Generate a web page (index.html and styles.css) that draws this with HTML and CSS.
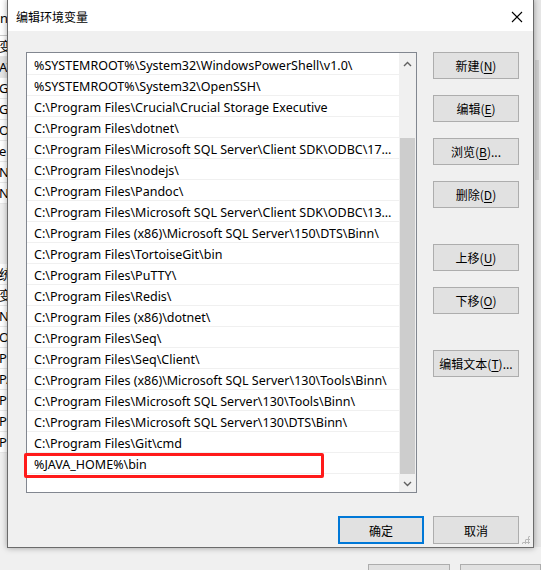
FILE: index.html
```html
<!DOCTYPE html>
<html lang="zh-CN">
<head>
  <meta charset="UTF-8">
  <title>编辑环境变量</title>
  <link rel="stylesheet" href="styles.css">
</head>
<body>

<div class="desktop">

  <!-- window behind the dialog, only its edges show -->
  <div class="back-left">
    <div class="back-title">nv</div>
    <div class="back-row">变</div>
    <div class="back-row sel">AV</div>
    <div class="back-row">Go</div>
    <div class="back-row">Go</div>
    <div class="back-row">O</div>
    <div class="back-row">e</div>
    <div class="back-row">N</div>
    <div class="back-row">N</div>
    <div class="back-gap"></div>
    <div class="back-row">统</div>
    <div class="back-row">变</div>
    <div class="back-row">N</div>
    <div class="back-row">O</div>
    <div class="back-row">Pa</div>
    <div class="back-row">PA</div>
    <div class="back-row">PF</div>
    <div class="back-row">PF</div>
    <div class="back-row">PF</div>
  </div>
  <div class="back-right">
    <div class="back-bar"></div>
  </div>
  <div class="back-bottom">
    <div class="back-btn"></div>
    <div class="back-btn"></div>
  </div>

  <div class="dialog">
    <div class="titlebar">
      <span class="title">编辑环境变量</span>
      <svg class="close" width="12" height="12" viewBox="0 0 12 12">
        <path d="M1 1 L11 11 M11 1 L1 11" stroke="#000" stroke-width="1.1" fill="none"/>
      </svg>
    </div>

    <div class="body">
      <div class="main">
        <div class="listbox">
          <div class="rows" id="rows"></div>
          <div class="scrollbar">
            <div class="arrow up">
              <svg width="9" height="6" viewBox="0 0 9 6"><path d="M1 5 L4.5 1.5 L8 5" stroke="#606060" stroke-width="1.4" fill="none"/></svg>
            </div>
            <div class="track">
              <div class="thumb"></div>
            </div>
            <div class="arrow down">
              <svg width="9" height="6" viewBox="0 0 9 6"><path d="M1 1 L4.5 4.5 L8 1" stroke="#606060" stroke-width="1.4" fill="none"/></svg>
            </div>
          </div>
          <div class="mark"></div>
        </div>

        <div class="side">
          <div class="group">
            <button>新建(<u>N</u>)</button>
            <button>编辑(<u>E</u>)</button>
            <button>浏览(<u>B</u>)...</button>
            <button>删除(<u>D</u>)</button>
          </div>
          <div class="group">
            <button>上移(<u>U</u>)</button>
            <button>下移(<u>O</u>)</button>
          </div>
          <div class="group">
            <button>编辑文本(<u>T</u>)...</button>
          </div>
        </div>
      </div>

      <div class="footer">
        <button class="default">确定</button>
        <button>取消</button>
      </div>
      <div class="grip"></div>
    </div>
  </div>

</div>

<script>
  var paths = [
    "%SYSTEMROOT%\\System32\\WindowsPowerShell\\v1.0\\",
    "%SYSTEMROOT%\\System32\\OpenSSH\\",
    "C:\\Program Files\\Crucial\\Crucial Storage Executive",
    "C:\\Program Files\\dotnet\\",
    "C:\\Program Files\\Microsoft SQL Server\\Client SDK\\ODBC\\170\\Tools\\Binn\\",
    "C:\\Program Files\\nodejs\\",
    "C:\\Program Files\\Pandoc\\",
    "C:\\Program Files\\Microsoft SQL Server\\Client SDK\\ODBC\\130\\Tools\\Binn\\",
    "C:\\Program Files (x86)\\Microsoft SQL Server\\150\\DTS\\Binn\\",
    "C:\\Program Files\\TortoiseGit\\bin",
    "C:\\Program Files\\PuTTY\\",
    "C:\\Program Files\\Redis\\",
    "C:\\Program Files (x86)\\dotnet\\",
    "C:\\Program Files\\Seq\\",
    "C:\\Program Files\\Seq\\Client\\",
    "C:\\Program Files (x86)\\Microsoft SQL Server\\130\\Tools\\Binn\\",
    "C:\\Program Files\\Microsoft SQL Server\\130\\Tools\\Binn\\",
    "C:\\Program Files\\Microsoft SQL Server\\130\\DTS\\Binn\\",
    "C:\\Program Files\\Git\\cmd",
    "%JAVA_HOME%\\bin"
  ];

  var rows = document.getElementById("rows");
  for (var i = 0; i < paths.length; i++) {
    var row = document.createElement("div");
    row.className = "row";
    row.textContent = paths[i];
    rows.appendChild(row);
  }
</script>

</body>
</html>
```

FILE: styles.css
```css
body {
  margin: 0;
  font-family: "Noto Sans", "Noto Sans CJK SC", sans-serif;
  font-size: 12px;
  color: #000;
  background: #f0f0f0;
}

.desktop {
  position: relative;
  width: 541px;
  height: 570px;
  overflow: hidden;
  background: #f0f0f0;
}

/* the window behind */
.back-left {
  position: absolute;
  left: 0;
  top: 0;
  width: 7px;
  height: 570px;
  overflow: hidden;
  background: #f0f0f0;
  font-size: 13px;
  line-height: 21px;
  white-space: nowrap;
  color: #000;
}

.back-title {
  height: 36px;
  padding-top: 8px;
  box-sizing: border-box;
  background: #fff;
  border-bottom: 1px solid #ccc;
}

.back-row {
  height: 21px;
  background: #fff;
  border-bottom: 1px solid #e8e8e8;
  box-sizing: border-box;
  text-indent: -1px;
}

.back-row.sel {
  background: #e5e5e5;
}

.back-gap {
  height: 60px;
  background: #f0f0f0;
}

.back-right {
  position: absolute;
  right: 0;
  top: 0;
  width: 8px;
  height: 570px;
  background: #e6e6e6;
  border-left: 1px solid #c8c8c8;
}

.back-bar {
  margin: 60px 0 0 2px;
  width: 4px;
  height: 120px;
  background: #d0d0d0;
}

.back-bottom {
  position: absolute;
  left: 0;
  bottom: 0;
  width: 541px;
  height: 23px;
  background: #f0f0f0;
  display: flex;
  gap: 10px;
  padding-left: 368px;
  box-sizing: border-box;
  align-items: flex-end;
}

.back-btn {
  width: 85px;
  height: 5px;
  border: 1px solid #adadad;
  border-bottom: none;
  background: #e1e1e1;
}

/* dialog */
.dialog {
  position: absolute;
  left: 7px;
  top: -1px;
  width: 525px;
  height: 547px;
  border: 1px solid #6b6b6b;
  background: #f0f0f0;
  box-shadow: 0 0 6px rgba(0, 0, 0, 0.35);
  display: flex;
  flex-direction: column;
}

.titlebar {
  height: 31px;
  background: #fff;
  display: flex;
  align-items: center;
  justify-content: space-between;
  padding: 0 10px 0 8px;
  flex-shrink: 0;
}

.title {
  font-family: "Noto Sans CJK SC", sans-serif;
  font-size: 12px;
  padding-top: 2px;
}

.close {
  margin-top: 2px;
}

.body {
  position: relative;
  flex: 1;
  padding: 21px 14px 0 18px;
  display: flex;
  flex-direction: column;
}

.main {
  display: flex;
  gap: 16px;
}

.listbox {
  position: relative;
  width: 389px;
  height: 439px;
  border: 1px solid #828790;
  background: #fff;
  display: flex;
}

.rows {
  flex: 1;
  min-width: 0;
  padding-top: 1px;
  font-size: 12.5px;
}

.row {
  height: 21px;
  line-height: 21px;
  padding: 1px 4px 0 7px;
  border-bottom: 1px solid #f0f0f0;
  box-sizing: border-box;
  white-space: nowrap;
  overflow: hidden;
  text-overflow: ellipsis;
}

.scrollbar {
  width: 17px;
  background: #f0f0f0;
  display: flex;
  flex-direction: column;
}

.arrow {
  height: 17px;
  display: flex;
  align-items: center;
  justify-content: center;
}

.arrow.up {
  height: 21px;
}

.track {
  flex: 1;
  padding: 64px 1px 1px 1px;
  display: flex;
  flex-direction: column;
}

.thumb {
  flex: 1;
  background: #cdcdcd;
}

/* red annotation round the last entry */
.mark {
  position: absolute;
  left: -3px;
  top: 400px;
  width: 294px;
  height: 19px;
  border: 3px solid #ff1a1a;
  border-radius: 2px;
}

.side {
  display: flex;
  flex-direction: column;
  gap: 36px;
}

.group {
  display: flex;
  flex-direction: column;
  gap: 16px;
}

button {
  width: 86px;
  height: 27px;
  padding: 0;
  font-family: "Noto Sans CJK SC", sans-serif;
  font-size: 12px;
  color: #000;
  background: #e1e1e1;
  border: 1px solid #adadad;
}

button u {
  text-decoration-thickness: 1px;
  text-underline-offset: 2px;
}

.footer {
  display: flex;
  justify-content: flex-end;
  gap: 9px;
  margin-top: 23px;
}

.footer button {
  height: 28px;
}

.footer .default {
  border: 2px solid #0078d7;
}

.grip {
  position: absolute;
  right: 3px;
  bottom: 3px;
  width: 9px;
  height: 9px;
  background:
    radial-gradient(circle, #b8b8b8 1.2px, transparent 1.3px) 0 0 / 3px 3px;
  clip-path: polygon(100% 0, 100% 100%, 0 100%);
}
```
